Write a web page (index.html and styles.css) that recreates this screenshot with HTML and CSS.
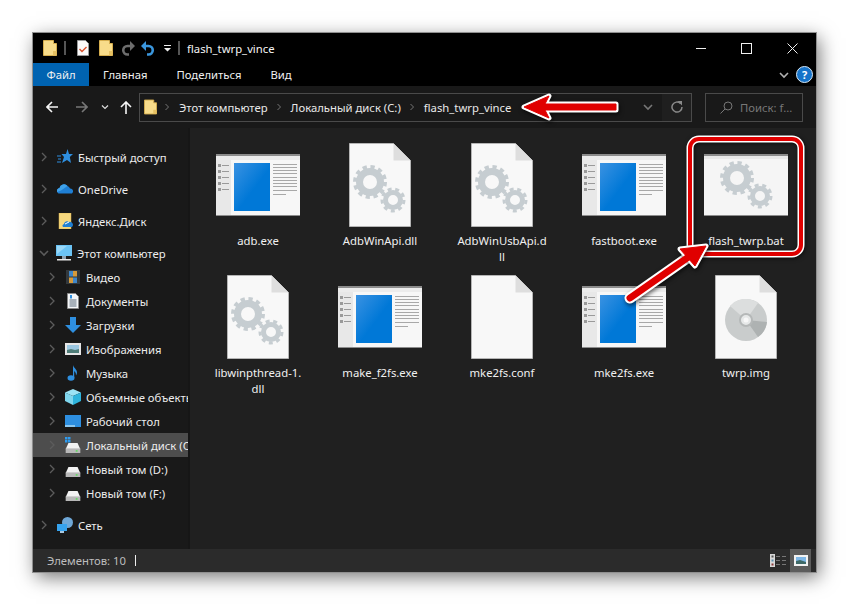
FILE: index.html
```html
<!DOCTYPE html>
<html>
<head>
    <title>flash_twrp_vince</title>
    <link rel="stylesheet" href="styles.css">
</head>
<body>
    <svg class="defs" width="0" height="0">
        <defs>
            <linearGradient id="blue" x1="0" y1="0" x2="1" y2="1">
                <stop offset="0" stop-color="#3a92e2"/>
                <stop offset="0.55" stop-color="#0078d7"/>
                <stop offset="1" stop-color="#0078d7"/>
            </linearGradient>
            <symbol id="folder" viewBox="0 0 14 16">
                <path d="M.5.5h10v3h3v12H.5z" fill="#f8dc8a" stroke="#d6ae4e"/>
                <path d="M10 11h3.500v4.500H10z" fill="#e6c163"/>
            </symbol>
            <symbol id="chev" viewBox="0 0 8 10">
                <path d="M2 1l4 4-4 4" fill="none" stroke="currentColor" stroke-width="1.3"/>
            </symbol>
            <symbol id="chevdown" viewBox="0 0 10 8">
                <path d="M1 2l4 4 4-4" fill="none" stroke="currentColor" stroke-width="1.6"/>
            </symbol>
            <symbol id="exe" viewBox="0 0 84 62">
                <rect width="84" height="62" fill="#f7f7f7"/>
                <rect width="84" height="2" fill="#8c8c8c"/>
                <rect y="2" width="84" height="4" fill="#ececec"/>
                <rect y="6" width="15" height="55" fill="#e8e8e8"/>
                <rect y="61" width="84" height="1" fill="#8c8c8c"/>
                <rect x="18" y="9" width="36" height="48" fill="url(#blue)"/>
                <g fill="#9a9a9a">
                    <rect x="2" y="10" width="3" height="3"/><rect x="6" y="11" width="7" height="1"/>
                    <rect x="2" y="16" width="3" height="3"/><rect x="6" y="17" width="7" height="1"/>
                    <rect x="2" y="22" width="3" height="3"/><rect x="6" y="23" width="7" height="1"/>
                    <rect x="2" y="28" width="3" height="3"/><rect x="6" y="29" width="7" height="1"/>
                    <rect x="2" y="34" width="3" height="3"/><rect x="6" y="35" width="7" height="1"/>
                </g>
                <g fill="#a8a8a8">
                    <rect x="57" y="10" width="24" height="1"/><rect x="57" y="13" width="24" height="1"/>
                    <rect x="57" y="16" width="24" height="1"/><rect x="57" y="19" width="24" height="1"/>
                    <rect x="57" y="23" width="24" height="1"/><rect x="57" y="26" width="24" height="1"/>
                    <rect x="57" y="29" width="24" height="1"/><rect x="57" y="32" width="24" height="1"/>
                    <rect x="57" y="36" width="24" height="1"/><rect x="57" y="40" width="13" height="1"/>
                </g>
            </symbol>
            <symbol id="gears" viewBox="0 0 54 50">
                <g fill="none" stroke="#c6cdd1">
                    <circle cx="17" cy="17" r="10.500" stroke-width="7"/>
                    <circle cx="17" cy="17" r="15" stroke-width="4" stroke-dasharray="4.200 3.654"/>
                    <circle cx="40" cy="35" r="7.500" stroke-width="5"/>
                    <circle cx="40" cy="35" r="11" stroke-width="3" stroke-dasharray="4 3.680"/>
                </g>
            </symbol>
            <symbol id="page" viewBox="0 0 62 84">
                <path d="M.5.5h44l17 17v66H.5z" fill="#f8f8f8" stroke="#b5b5b5"/>
                <path d="M44.500.5v17h17z" fill="#dedede"/>
            </symbol>
            <symbol id="bat" viewBox="0 0 84 62">
                <rect width="84" height="62" fill="#f5f5f5"/>
                <rect width="84" height="2" fill="#8c8c8c"/>
                <rect y="2" width="84" height="3" fill="#e9e9e9"/>
                <rect y="61" width="84" height="1" fill="#8c8c8c"/>
            </symbol>
            <symbol id="drive" viewBox="0 0 16 12">
                <path d="M3 1h10l3 7H0z" fill="#f2f2f2"/>
                <rect y="7" width="16" height="5" fill="#b8b8b8"/>
                <rect x="11" y="9" width="2" height="1.500" fill="#4ee04e"/>
            </symbol>
        </defs>
    </svg>

    <div class="window">
        <div class="titlebar">
            <svg class="qa-icon" width="14" height="16"><use href="#folder"/></svg>
            <span class="qa-sep"></span>
            <svg class="qa-page" width="12" height="16" viewBox="0 0 12 16">
                <path d="M.5.5h8l3 3v12H.5z" fill="#fafafa" stroke="#9a9a9a"/>
                <path d="M2.500 9l2.500 2.500L9.500 7" fill="none" stroke="#d8502c" stroke-width="1.400"/>
            </svg>
            <svg class="qa-folder2" width="14" height="16"><use href="#folder"/></svg>
            <svg class="qa-undo" width="14" height="15" viewBox="0 0 14 15">
                <path d="M11 5H6.500a4.200 4.200 0 0 0 0 8.500H8" fill="none" stroke="#6d6d6d" stroke-width="2.600"/>
                <path d="M14 5L9 0v10z" fill="#6d6d6d"/>
            </svg>
            <svg class="qa-redo" width="14" height="15" viewBox="0 0 14 15">
                <path d="M3 5h4.500a4.200 4.200 0 0 1 0 8.500H6" fill="none" stroke="#3a96dd" stroke-width="2.600"/>
                <path d="M0 5l5-5v10z" fill="#3a96dd"/>
            </svg>
            <svg class="qa-drop" width="7" height="7" viewBox="0 0 7 7">
                <path d="M0 0h7v1H0zM0 3h7L3.500 6.500z" fill="#eee"/>
            </svg>
            <span class="qa-sep qa-sep-last"></span>
            <span class="title">flash_twrp_vince</span>
            <div class="winbtns">
                <span class="win-min"></span>
                <span class="win-max"></span>
                <svg class="win-close" width="11" height="11" viewBox="0 0 11 11">
                    <path d="M.5.500l10 10M10.500.500l-10 10" stroke="#f0f0f0" fill="none"/>
                </svg>
            </div>
        </div>

        <div class="tabs">
            <span class="tab tab-file">Файл</span>
            <span class="tab tab-home">Главная</span>
            <span class="tab tab-share">Поделиться</span>
            <span class="tab tab-view">Вид</span>
            <svg class="ribbon-chev" width="10" height="8"><use href="#chevdown"/></svg>
            <span class="help">?</span>
        </div>

        <div class="navbar">
            <svg class="nav-back" width="12" height="12" viewBox="0 0 12 12">
                <path d="M12 6H1M6 1L1 6l5 5" fill="none" stroke="#f5f5f5" stroke-width="1.600"/>
            </svg>
            <svg class="nav-fwd" width="12" height="12" viewBox="0 0 12 12">
                <path d="M0 6h11M6 1l5 5-5 5" fill="none" stroke="#777" stroke-width="1.600"/>
            </svg>
            <svg class="nav-down" width="8" height="6"><use href="#chevdown"/></svg>
            <svg class="nav-up" width="12" height="13" viewBox="0 0 12 13">
                <path d="M6 13V1M1 6l5-5 5 5" fill="none" stroke="#f5f5f5" stroke-width="1.600"/>
            </svg>
            <div class="address">
                <svg class="addr-folder" width="13" height="16"><use href="#folder"/></svg>
                <svg class="crumb-chev" width="6" height="8"><use href="#chev"/></svg>
                <span class="crumb">Этот компьютер</span>
                <svg class="crumb-chev" width="6" height="8"><use href="#chev"/></svg>
                <span class="crumb">Локальный диск (C:)</span>
                <svg class="crumb-chev" width="6" height="8"><use href="#chev"/></svg>
                <span class="crumb">flash_twrp_vince</span>
                <svg class="addr-drop" width="10" height="8"><use href="#chevdown"/></svg>
                <span class="refresh">
                    <svg width="12" height="12" viewBox="0 0 12 12">
                        <path d="M9.500 2.500A5 5 0 1 0 11 6" fill="none" stroke="#8a8a8a" stroke-width="1.500"/>
                        <path d="M6.500 0h4.500v4.500z" fill="#8a8a8a"/>
                    </svg>
                </span>
            </div>
            <div class="search">
                <svg width="13" height="13" viewBox="0 0 13 13">
                    <circle cx="8" cy="5" r="4" fill="none" stroke="#777"/>
                    <path d="M5 8l-4.500 4.500" stroke="#777"/>
                </svg>
                <span>Поиск: f...</span>
            </div>
        </div>

        <div class="main">
            <div class="sidebar">
                <div class="row group">
                    <svg class="chev" width="8" height="10"><use href="#chev"/></svg>
                    <svg class="icon" width="16" height="16" viewBox="0 0 16 16">
                        <path d="M10.500 0l1.500 5h4l-3.200 3 1.200 6-4-3-5 3 2-6-2.500-3H9z" fill="#2e8fe0"/>
                        <path d="M0 7h4M1 10h3M0 13h4" stroke="#2e8fe0"/>
                    </svg>
                    <span>Быстрый доступ</span>
                </div>
                <div class="row group">
                    <svg class="chev" width="8" height="10"><use href="#chev"/></svg>
                    <svg class="icon" width="16" height="16" viewBox="0 0 16 16">
                        <path d="M0 11a3 3 0 0 1 2.500-4A4.500 4.500 0 0 1 10.500 5 4 4 0 0 1 13 7.500a2.800 2.800 0 0 1 3 3v.500l-1 1.500H1.500z" fill="#1f7fd4"/>
                        <path d="M0 11a3 3 0 0 1 2.500-4A4.500 4.500 0 0 1 10.500 5L4 9.500z" fill="#3fa2ea"/>
                    </svg>
                    <span>OneDrive</span>
                </div>
                <div class="row group">
                    <svg class="chev" width="8" height="10"><use href="#chev"/></svg>
                    <svg class="icon" width="16" height="16" viewBox="0 0 16 16">
                        <rect x="2" width="12" height="16" fill="#f6d87e" stroke="#d6ae4e" stroke-width=".5"/>
                        <path d="M6 14a2 2 0 0 1 1-3 3 3 0 0 1 5-2 3 3 0 0 1 3 5z" fill="#1f7fd4"/>
                        <path d="M8 11l4-2" stroke="#fff"/>
                    </svg>
                    <span>Яндекс.Диск</span>
                </div>
                <div class="row group open">
                    <svg class="chev chev-open" width="10" height="8"><use href="#chevdown"/></svg>
                    <svg class="icon" width="16" height="16" viewBox="0 0 16 16">
                        <rect width="16" height="11" fill="#6cc4f5"/>
                        <path d="M1 1h10L1 9z" fill="#9ad8f8"/>
                        <rect x="6" y="11" width="4" height="3" fill="#8fa4b4"/>
                        <rect x="1" y="14" width="14" height="1.500" fill="#e8e8e8"/>
                    </svg>
                    <span>Этот компьютер</span>
                </div>
                <div class="row child">
                    <svg class="chev" width="8" height="10"><use href="#chev"/></svg>
                    <svg class="icon" width="16" height="16" viewBox="0 0 16 16">
                        <rect x="1" y="1" width="14" height="14" fill="#33393d"/>
                        <rect x="4" y="2" width="4" height="5.500" fill="#3f86c8"/>
                        <rect x="8" y="2" width="4" height="5.500" fill="#d69a3a"/>
                        <rect x="4" y="8.500" width="4" height="5.500" fill="#d69a3a"/>
                        <rect x="8" y="8.500" width="4" height="5.500" fill="#3f86c8"/>
                    </svg>
                    <span>Видео</span>
                </div>
                <div class="row child">
                    <svg class="chev" width="8" height="10"><use href="#chev"/></svg>
                    <svg class="icon" width="16" height="16" viewBox="0 0 16 16">
                        <path d="M2.500.5h8l3 3v12h-11z" fill="#f4f6f8" stroke="#8a8a8a"/>
                        <path d="M4.500 7h7M4.500 9h7M4.500 11h7M4.500 13h7" stroke="#5a6b7a"/>
                        <path d="M6 2v3.500" stroke="#2e8fe0" stroke-width="2"/>
                    </svg>
                    <span>Документы</span>
                </div>
                <div class="row child">
                    <svg class="chev" width="8" height="10"><use href="#chev"/></svg>
                    <svg class="icon" width="16" height="16" viewBox="0 0 16 16">
                        <path d="M5 0h6v8h5l-8 8-8-8h5z" fill="#2e8fe0"/>
                    </svg>
                    <span>Загрузки</span>
                </div>
                <div class="row child">
                    <svg class="chev" width="8" height="10"><use href="#chev"/></svg>
                    <svg class="icon" width="16" height="16" viewBox="0 0 16 16">
                        <rect y="2" width="16" height="12" fill="#e6e6e6"/>
                        <rect x="2" y="4" width="12" height="8" fill="#9cc8e2"/>
                        <path d="M2 12V9l4-1 4 1 4-1v4z" fill="#4f7d78"/>
                    </svg>
                    <span>Изображения</span>
                </div>
                <div class="row child">
                    <svg class="chev" width="8" height="10"><use href="#chev"/></svg>
                    <svg class="icon" width="16" height="16" viewBox="0 0 16 16">
                        <ellipse cx="6" cy="13" rx="3.500" ry="2.800" fill="#2e8fe0"/>
                        <path d="M8 13V0c.5 3 4 4 4 7.500 0 1-.3 2-1 3 .2-3-1.500-4-1.800-4.500V13z" fill="#2e8fe0"/>
                    </svg>
                    <span>Музыка</span>
                </div>
                <div class="row child">
                    <svg class="chev" width="8" height="10"><use href="#chev"/></svg>
                    <svg class="icon" width="16" height="16" viewBox="0 0 16 16">
                        <path d="M8 0l8 3.500-8 3.500L0 3.500z" fill="#9be3f5"/>
                        <path d="M0 3.500L8 7v9l-8-4z" fill="#7fd6ee"/>
                        <path d="M16 3.500L8 7v9l8-4z" fill="#2fb4dc"/>
                    </svg>
                    <span>Объемные объекты</span>
                </div>
                <div class="row child">
                    <svg class="chev" width="8" height="10"><use href="#chev"/></svg>
                    <svg class="icon" width="16" height="16" viewBox="0 0 16 16">
                        <rect y="2" width="16" height="12" fill="#2e8fe0"/>
                        <path d="M0 12h10v2H0z" fill="#8cc8f0"/>
                    </svg>
                    <span>Рабочий стол</span>
                </div>
                <div class="row child selected">
                    <svg class="chev" width="8" height="10"><use href="#chev"/></svg>
                    <svg class="icon" width="16" height="16" viewBox="0 0 16 16">
                        <use href="#drive" y="5" width="16" height="11"/>
                        <path d="M0 0h2.500v2.500H0zM3 0h2.500v2.500H3zM0 3h2.500v2.500H0zM3 3h2.500v2.500H3z" fill="#2e9cf0"/>
                    </svg>
                    <span>Локальный диск (C:)</span>
                </div>
                <div class="row child">
                    <svg class="chev" width="8" height="10"><use href="#chev"/></svg>
                    <svg class="icon" width="16" height="16" viewBox="0 0 16 16"><use href="#drive" y="5" width="16" height="11"/></svg>
                    <span>Новый том (D:)</span>
                </div>
                <div class="row child">
                    <svg class="chev" width="8" height="10"><use href="#chev"/></svg>
                    <svg class="icon" width="16" height="16" viewBox="0 0 16 16"><use href="#drive" y="5" width="16" height="11"/></svg>
                    <span>Новый том (F:)</span>
                </div>
                <div class="row group">
                    <svg class="chev" width="8" height="10"><use href="#chev"/></svg>
                    <svg class="icon" width="16" height="16" viewBox="0 0 16 16">
                        <circle cx="10.500" cy="5.500" r="5.500" fill="#6fa8d8"/>
                        <rect y="7" width="10" height="7" fill="#36a3ee"/>
                        <rect x="3" y="14" width="4" height="2" fill="#a8c8e0"/>
                    </svg>
                    <span>Сеть</span>
                </div>
            </div>

            <div class="files">
                <div class="tile">
                    <div class="thumb"><svg width="84" height="62"><use href="#exe"/></svg></div>
                    <span class="name">adb.exe</span>
                </div>
                <div class="tile">
                    <div class="thumb gear-page">
                        <svg width="62" height="84"><use href="#page"/></svg>
                        <svg class="gear-over" width="54" height="50"><use href="#gears"/></svg>
                    </div>
                    <span class="name">AdbWinApi.dll</span>
                </div>
                <div class="tile">
                    <div class="thumb gear-page">
                        <svg width="62" height="84"><use href="#page"/></svg>
                        <svg class="gear-over" width="54" height="50"><use href="#gears"/></svg>
                    </div>
                    <span class="name">AdbWinUsbApi.d<br>ll</span>
                </div>
                <div class="tile">
                    <div class="thumb"><svg width="84" height="62"><use href="#exe"/></svg></div>
                    <span class="name">fastboot.exe</span>
                </div>
                <div class="tile">
                    <div class="thumb gear-bat">
                        <svg width="84" height="62"><use href="#bat"/></svg>
                        <svg class="gear-over" width="54" height="50"><use href="#gears"/></svg>
                    </div>
                    <span class="name">flash_twrp.bat</span>
                </div>
                <div class="tile">
                    <div class="thumb gear-page">
                        <svg width="62" height="84"><use href="#page"/></svg>
                        <svg class="gear-over" width="54" height="50"><use href="#gears"/></svg>
                    </div>
                    <span class="name">libwinpthread-1.<br>dll</span>
                </div>
                <div class="tile">
                    <div class="thumb"><svg width="84" height="62"><use href="#exe"/></svg></div>
                    <span class="name">make_f2fs.exe</span>
                </div>
                <div class="tile">
                    <div class="thumb"><svg width="62" height="84"><use href="#page"/></svg></div>
                    <span class="name">mke2fs.conf</span>
                </div>
                <div class="tile">
                    <div class="thumb"><svg width="84" height="62"><use href="#exe"/></svg></div>
                    <span class="name">mke2fs.exe</span>
                </div>
                <div class="tile">
                    <div class="thumb gear-page">
                        <svg width="62" height="84"><use href="#page"/></svg>
                        <svg class="disc" width="42" height="42" viewBox="0 0 42 42">
                            <circle cx="21" cy="21" r="21" fill="#c9cccc"/>
                            <path d="M21 21L5 7A21 21 0 0 1 33 4z" fill="#dcdede"/>
                            <path d="M21 21l21 2a21 21 0 0 1-9 15z" fill="#aeb2b2"/>
                            <circle cx="21" cy="21" r="6" fill="#e6e8e8" stroke="#b5b8b8" stroke-width="2"/>
                            <circle cx="21" cy="21" r="2.500" fill="#f8f8f8"/>
                        </svg>
                    </div>
                    <span class="name">twrp.img</span>
                </div>
            </div>
        </div>

        <div class="status">
            <span>Элементов: 10</span>
            <span class="status-bar"></span>
            <svg class="view-list" width="16" height="13" viewBox="0 0 16 13">
                <rect width="5" height="13" fill="#d8d8d8"/>
                <rect x="1.500" y="1.500" width="2" height="2" fill="#555"/>
                <rect x="1.500" y="5.500" width="2" height="2" fill="#5a8fb0"/>
                <rect x="1.500" y="9.500" width="2" height="2" fill="#8a3a3a"/>
                <path d="M6 2.500h4M12 2.500h4M6 6.500h4M12 6.500h4M6 10.500h4M12 10.500h4" stroke="#777"/>
            </svg>
            <span class="view-tile">
                <svg width="14" height="11" viewBox="0 0 14 11">
                    <rect width="14" height="11" fill="#f2f2f2"/>
                    <rect x="2" y="2" width="10" height="7" fill="#7fb8e8"/>
                    <path d="M2 9V6l4-1 6 2v2z" fill="#3f6a68"/>
                </svg>
            </span>
        </div>
    </div>

    <svg class="marks" width="849" height="605" viewBox="0 0 849 605">
        <rect class="frame-white" x="690" y="139" width="111" height="115" rx="9"/>
        <rect class="frame-red" x="690" y="139" width="111" height="115" rx="9"/>

        <path class="arrow-white" d="M524 107L549 96l-4 8h71v6h-71l4 8z"/>
        <path class="arrow-red" d="M524 107L549 96l-4 8h71v6h-71l4 8z"/>

        <line class="shaft-white" x1="630" y1="298" x2="690" y2="256"/>
        <path class="arrow-white" d="M706 246L680 249l15 17z"/>
        <line class="shaft-red" x1="630" y1="298" x2="690" y2="256"/>
        <path class="arrow-red" d="M706 246L680 249l15 17z"/>
    </svg>
</body>
</html>
```

FILE: styles.css
```css
html, body {
    margin: 0;
    height: 100%;
    background: #fff;
    overflow: hidden;
}
body {
    font-family: "Noto Sans", sans-serif;
    font-size: 11.3px;
    position: relative;
}
svg {
    display: block;
    flex: none;
}
.defs {
    position: absolute;
}
.window {
    width: 783px;
    height: 539px;
    margin: 33px 0 0 33px;
    display: flex;
    flex-direction: column;
    background: #191919;
    color: #f0f0f0;
    box-shadow: 0 0 0 1px #8f8f8f, 3px 5px 18px rgba(0,0,0,0.55);
}

/* title bar */
.titlebar {
    height: 30px;
    flex: none;
    background: #000;
    display: flex;
    align-items: center;
    padding-left: 10px;
}
.qa-sep {
    width: 2px;
    height: 14px;
    background: #555;
    margin-left: 7px;
}
.qa-page {
    margin-left: 11px;
}
.qa-folder2 {
    margin-left: 10px;
}
.qa-undo {
    margin-left: 8px;
}
.qa-redo {
    margin-left: 6px;
}
.qa-drop {
    margin-left: 9px;
}
.qa-sep-last {
    margin-left: 7px;
}
.title {
    margin-left: 7px;
    color: #f4f4f4;
}
.winbtns {
    margin-left: auto;
    display: flex;
    align-items: center;
    padding-right: 18px;
}
.win-min {
    width: 10px;
    height: 1px;
    background: #f0f0f0;
}
.win-max {
    width: 9px;
    height: 9px;
    border: 1px solid #f0f0f0;
    margin-left: 35px;
}
.win-close {
    margin-left: 35px;
}

/* ribbon tabs */
.tabs {
    height: 23px;
    flex: none;
    background: #000;
    display: flex;
    align-items: center;
}
.tab {
    color: #f0f0f0;
}
.tab-file {
    width: 56px;
    height: 23px;
    line-height: 23px;
    text-align: center;
    background: #0063b1;
}
.tab-home {
    margin-left: 14px;
}
.tab-share {
    margin-left: 29px;
}
.tab-view {
    margin-left: 29px;
}
.ribbon-chev {
    margin-left: auto;
    color: #b0b0b0;
}
.help {
    width: 15px;
    height: 15px;
    line-height: 15px;
    margin: 0 3px 0 7px;
    text-align: center;
    border-radius: 50%;
    background: #1673c9;
    border: 1px solid #d8e8f5;
    color: #fff;
    font-weight: 700;
    font-size: 11px;
}

/* address row */
.navbar {
    height: 42px;
    flex: none;
    background: #191919;
    display: flex;
    align-items: center;
    padding-left: 13px;
}
.nav-fwd {
    margin-left: 18px;
}
.nav-down {
    margin-left: 13px;
    color: #ddd;
}
.nav-up {
    margin-left: 11px;
}
.address {
    width: 553px;
    height: 29px;
    margin-left: 7px;
    border: 1px solid #4a4a4a;
    box-sizing: border-box;
    display: flex;
    align-items: center;
    padding-left: 4px;
    color: #e8e8e8;
}
.addr-folder {
    margin-right: -1px;
}
.crumb-chev {
    margin: 0 9px 0 8px;
    color: #777;
}
.addr-drop {
    margin-left: auto;
    color: #777;
}
.refresh {
    width: 29px;
    height: 27px;
    margin-left: 9px;
    background: #1f1f1f;
    display: flex;
    align-items: center;
    justify-content: center;
}
.search {
    width: 98px;
    height: 29px;
    margin-left: 13px;
    border: 1px solid #4a4a4a;
    box-sizing: border-box;
    display: flex;
    align-items: center;
    gap: 7px;
    padding-left: 14px;
    color: #777;
    white-space: nowrap;
    overflow: hidden;
}

/* tree and icons */
.main {
    flex: 1;
    display: flex;
    min-height: 0;
}
.sidebar {
    width: 155px;
    flex: none;
    padding-top: 9px;
    overflow: hidden;
    border-right: 2px solid #161616;
    background: #191919;
}
.row {
    height: 24px;
    display: flex;
    align-items: center;
    white-space: nowrap;
    color: #ececec;
}
.row .chev {
    color: #5c5c5c;
    margin-right: 9px;
}
.group {
    margin-top: 8px;
    padding-left: 7px;
}
.group .icon {
    margin-right: 5px;
}
.child {
    padding-left: 15px;
}
.child .icon {
    margin-right: 5px;
}
.chev-open {
    margin-right: 7px !important;
    margin-left: -1px;
}
.selected {
    background: #4d4d4d;
}
.files {
    flex: 1;
    background: #202020;
    padding: 15px 0 0 7px;
    display: grid;
    grid-template-columns: repeat(5, 122px);
    grid-auto-rows: 132px;
    align-content: start;
}
.tile {
    display: flex;
    flex-direction: column;
    align-items: center;
    text-align: center;
}
.thumb {
    width: 84px;
    height: 84px;
    display: flex;
    align-items: center;
    justify-content: center;
    position: relative;
    margin-bottom: 6px;
}
.name {
    line-height: 15.5px;
    color: #f0f0f0;
}
.gear-over {
    position: absolute;
    left: 15px;
    top: 22px;
}
.gear-bat .gear-over {
    left: 16px;
    top: 18px;
}
.disc {
    position: absolute;
    left: 21px;
    top: 24px;
}

/* status bar */
.status {
    height: 23px;
    flex: none;
    background: #2b2b2b;
    display: flex;
    align-items: center;
    padding-left: 14px;
    color: #bdbdbd;
}
.status-bar {
    width: 1px;
    height: 11px;
    margin-left: 9px;
    background: #eee;
}
.view-list {
    margin-left: auto;
}
.view-tile {
    width: 21px;
    height: 23px;
    margin: 0 5px 0 4px;
    background: #5c5c5c;
    display: flex;
    align-items: center;
    justify-content: center;
}

/* red marks on top of the window */
.marks {
    position: absolute;
    left: 0;
    top: 0;
    pointer-events: none;
}
.frame-white {
    fill: none;
    stroke: #fff;
    stroke-width: 7;
    filter: drop-shadow(1px 1px 2px rgba(0,0,0,0.6));
}
.frame-red {
    fill: none;
    stroke: #e00000;
    stroke-width: 4;
}
.arrow-white {
    fill: #fff;
    stroke: #fff;
    stroke-width: 5;
    stroke-linejoin: round;
    filter: drop-shadow(1px 2px 2px rgba(0,0,0,0.6));
}
.arrow-red {
    fill: #e00000;
    stroke: #e00000;
    stroke-width: 1;
    stroke-linejoin: round;
}
.shaft-white {
    stroke: #fff;
    stroke-width: 11;
    stroke-linecap: round;
    filter: drop-shadow(1px 2px 2px rgba(0,0,0,0.6));
}
.shaft-red {
    stroke: #e00000;
    stroke-width: 7;
    stroke-linecap: round;
}
```
